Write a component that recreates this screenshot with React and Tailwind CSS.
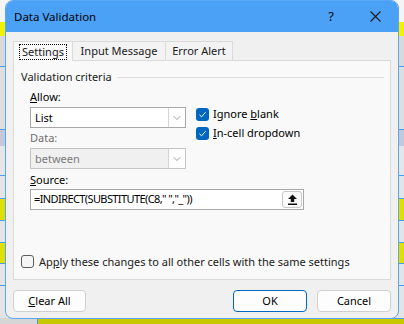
import { ChevronDown } from 'lucide-react'

const font = { fontFamily: '"Noto Sans", "Open Sans", sans-serif' }

// spreadsheet rows peeking out behind the dialog
const rows = [
  { h: 'h-[22px]', bg: 'bg-[#f4f4f4]' },
  { h: 'h-[14px]', bg: 'bg-[#f2f200]' },
  { h: 'h-[31px]', bg: 'bg-[#d9d9d9] border-b border-[#4a9be8]' },
  { h: 'h-[63px]', bg: 'bg-[#dedede] border-b border-[#4a9be8]' },
  { h: 'h-[16px]', bg: 'bg-[#c3c9d9]' },
  { h: 'h-[30px]', bg: 'bg-[#e6e6e6] border-b border-[#4a9be8]' },
  { h: 'h-[23px]', bg: 'bg-[#e4e4e4] border-b border-[#4a9be8]' },
  { h: 'h-[22px]', bg: 'bg-[#e0e000] border-b border-[#4a9be8]' },
  { h: 'h-[22px]', bg: 'bg-[#e4e4e4] border-b border-[#4a9be8]' },
  { h: 'h-[21px]', bg: 'bg-[#e0e000] border-b border-[#4a9be8]' },
  { h: 'h-[22px]', bg: 'bg-[#e4e4e4] border-b border-[#4a9be8]' },
  { h: 'h-[32px]', bg: 'bg-[#e4e4e4]' },
]

function Check({ checked }) {
  if (checked) {
    return (
      <span className="w-[13px] h-[13px] rounded-[3px] bg-[#0067c0] flex items-center justify-center shrink-0">
        <svg width="9" height="9" viewBox="0 0 9 9">
          <path d="M1.5 4.8 L3.6 6.8 L7.6 2.2" fill="none" stroke="#fff" strokeWidth="1" />
        </svg>
      </span>
    )
  }
  return <span className="w-[13px] h-[13px] rounded-[3px] border border-[#5c5c5c] bg-[#f6f6f6] shrink-0" />
}

function Select({ value, disabled }) {
  return (
    <div
      className={`w-[156px] h-[21px] flex border ${
        disabled ? 'border-[#c4c4c4] bg-[#f0f0f0] text-[#7a7a7a]' : 'border-[#a8a8a8] bg-white text-black'
      }`}
    >
      <div className="flex-1 pl-[4px] leading-[19px]">{value}</div>
      <div className={`w-[17px] flex items-center justify-center border-l ${disabled ? 'border-[#d4d4d4] bg-white' : 'border-[#d4d4d4]'}`}>
        <ChevronDown size={12} strokeWidth={1.2} color="#5a5a5a" />
      </div>
    </div>
  )
}

function Btn({ children, primary, className = '' }) {
  return (
    <button
      className={`h-[22px] rounded-[4px] bg-[#fdfdfd] text-[11px] text-black border ${
        primary ? 'border-[#0067c0]' : 'border-[#d0d0d0]'
      } ${className}`}
    >
      {children}
    </button>
  )
}

export default function App() {
  return (
    <div className="relative w-[404px] h-[324px] overflow-hidden bg-[#e4e4e4]" style={font}>
      {/* background sheet */}
      <div className="flex flex-col">
        {rows.map((r, i) => (
          <div key={i} className={`${r.h} ${r.bg}`} />
        ))}
      </div>
      <div className="absolute left-0 right-0 bottom-0 h-[6px] flex">
        <div className="w-[38px] bg-[#d6d6d6] border-r border-[#4a9be8]" />
        <div className="flex-1 bg-[#c8c800] border-t border-[#4a9be8]" />
      </div>

      {/* dialog */}
      <div className="absolute left-[5px] top-0 w-[394px] h-[319px] rounded-[8px] border border-[#5aa6f2] bg-[#f0f0f0] overflow-hidden flex flex-col text-[11px] text-black">
        <div className="h-[31px] bg-[#4aa1f6] flex items-center pl-[8px] pr-[17px]">
          <span className="flex-1 text-[11.5px]">Data Validation</span>
          <span className="w-[20px] text-center text-[13px]">?</span>
          <svg className="ml-[29px]" width="11" height="11" viewBox="0 0 11 11">
            <path d="M0.5 0.5 L10.5 10.5 M10.5 0.5 L0.5 10.5" stroke="#1a1a1a" strokeWidth="1.1" />
          </svg>
        </div>

        <div className="px-[7px] pt-[9px] flex flex-col">
          {/* tabs */}
          <div className="flex h-[19px] relative z-10 text-[#202020]">
            <div className="w-[60px] h-[20px] bg-[#f9f9f9] border border-b-0 border-[#dadada] flex items-center justify-center">
              <span className="border border-dotted border-black px-[2px] leading-[14px] h-[16px]">Settings</span>
            </div>
            <div className="w-[93px] bg-[#f3f3f3] border border-l-0 border-b-0 border-[#dadada] flex items-center justify-center">Input Message</div>
            <div className="w-[67px] bg-[#f3f3f3] border border-l-0 border-b-0 border-[#dadada] flex items-center justify-center">Error Alert</div>
          </div>

          {/* panel */}
          <div className="h-[220px] bg-[#f9f9f9] border border-[#dadada] flex flex-col">
            <div className="mt-[8px] pl-[7px] pr-[6px] flex items-center leading-[16px] text-[#202020]">
              <span>Validation criteria</span>
              <div className="flex-1 ml-[5px] h-px bg-[#dcdcdc]" />
            </div>

            <div className="pl-[16px] mt-[4px] flex flex-col">
              <div className="leading-[16px]"><u>A</u>llow:</div>
              <div className="flex items-start h-[21px] mt-[2px]">
                <Select value="List" />
                <div className="ml-[10px] flex flex-col gap-[6px] pt-[1px]">
                  <div className="flex items-center gap-[4px] h-[13px]">
                    <Check checked />
                    <span>Ignore <u>b</u>lank</span>
                  </div>
                  <div className="flex items-center gap-[4px] h-[13px]">
                    <Check checked />
                    <span><u>I</u>n-cell dropdown</span>
                  </div>
                </div>
              </div>
              <div className="leading-[16px] mt-[2px] text-[#6e6e6e]">Data:</div>
              <div className="mt-[2px]">
                <Select value="between" disabled />
              </div>
              <div className="leading-[16px] mt-[3px]"><u>S</u>ource:</div>
              <div className="w-[274px] h-[21px] mt-[1px] bg-white border border-[#a8a8a8] flex items-center pl-[3px] pr-[1px]">
                <span className="flex-1 whitespace-pre tracking-[-0.6px]">=INDIRECT(SUBSTITUTE(C8," ","_"))</span>
                <div className="w-[20px] h-[17px] rounded-[3px] border border-[#c8c8c8] bg-[#fbfbfb] flex items-center justify-center">
                  <svg width="11" height="11" viewBox="0 0 11 11">
                    <path d="M5.5 0.5 L1 5 H3.8 V8 H7.2 V5 H10 Z" fill="#111" />
                    <path d="M1 10.2 H10" stroke="#111" strokeWidth="1.4" />
                  </svg>
                </div>
              </div>
            </div>

            <div className="mt-auto mb-[9px] pl-[7px] flex items-center gap-[5px]">
              <Check />
              <span className="text-[#202020]">Ap<u>p</u>ly these changes to all other cells with the same settings</span>
            </div>
          </div>

          {/* buttons */}
          <div className="flex mt-[10px]">
            <Btn className="w-[73px]"><u>C</u>lear All</Btn>
            <div className="flex-1" />
            <Btn primary className="w-[74px]">OK</Btn>
            <Btn className="w-[74px] ml-[10px]">Cancel</Btn>
          </div>
        </div>
      </div>
    </div>
  )
}
